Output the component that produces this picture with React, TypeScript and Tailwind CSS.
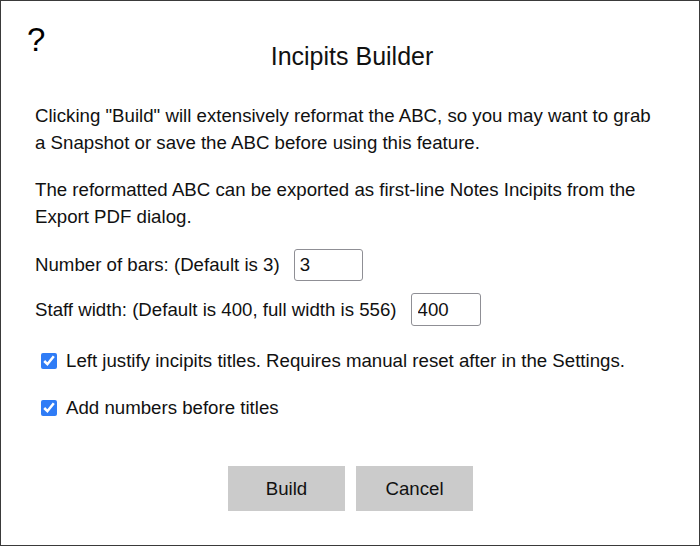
export default function App() {
  return (
    <div className="relative w-[700px] h-[546px] border border-[#3a3a3a] bg-white text-[#111] font-['Liberation_Sans',Arial,sans-serif] text-[18.67px] overflow-hidden">
      {/* help */}
      <button className="absolute left-[26px] top-[19px] text-[33px] leading-[40px] text-black">?</button>

      {/* title */}
      <h1 className="pt-[40px] text-center text-[25px] leading-[30px] pl-[4px]">Incipits Builder</h1>

      <div className="px-[34px]">
        <p className="mt-[31px] leading-[27px]">
          Clicking "Build" will extensively reformat the ABC, so you may want to grab a Snapshot or save the ABC before using this feature.
        </p>
        <p className="mt-[20px] leading-[27px]">
          The reformatted ABC can be exported as first-line Notes Incipits from the Export PDF dialog.
        </p>

        <div className="mt-[19px] flex items-center h-[32px]">
          <span>Number of bars: (Default is 3)</span>
          <input
            defaultValue="3"
            className="ml-[14px] w-[69px] h-[32px] border border-[#8f8f95] rounded-[3px] px-[5px] text-[18.67px] outline-none"
          />
        </div>
        <div className="mt-[12px] flex items-center h-[33px]">
          <span>Staff width: (Default is 400, full width is 556)</span>
          <input
            defaultValue="400"
            className="ml-[14px] w-[70px] h-[33px] border border-[#8f8f95] rounded-[3px] px-[6px] text-[18.67px] outline-none"
          />
        </div>

        <label className="mt-[21px] flex items-center h-[27px] pl-[6px] gap-[9px]">
          <input type="checkbox" defaultChecked className="w-[16px] h-[16px] accent-[#2f7cf6]" />
          <span>Left justify incipits titles. Requires manual reset after in the Settings.</span>
        </label>
        <label className="mt-[20px] flex items-center h-[27px] pl-[6px] gap-[9px]">
          <input type="checkbox" defaultChecked className="w-[16px] h-[16px] accent-[#2f7cf6]" />
          <span>Add numbers before titles</span>
        </label>
      </div>

      <div className="mt-[45px] flex justify-center gap-[11px] pl-[1px]">
        <button className="w-[117px] h-[45px] bg-[#cbcbcb] text-[18.67px] text-[#111]">Build</button>
        <button className="w-[117px] h-[45px] bg-[#cbcbcb] text-[18.67px] text-[#111]">Cancel</button>
      </div>
    </div>
  );
}
